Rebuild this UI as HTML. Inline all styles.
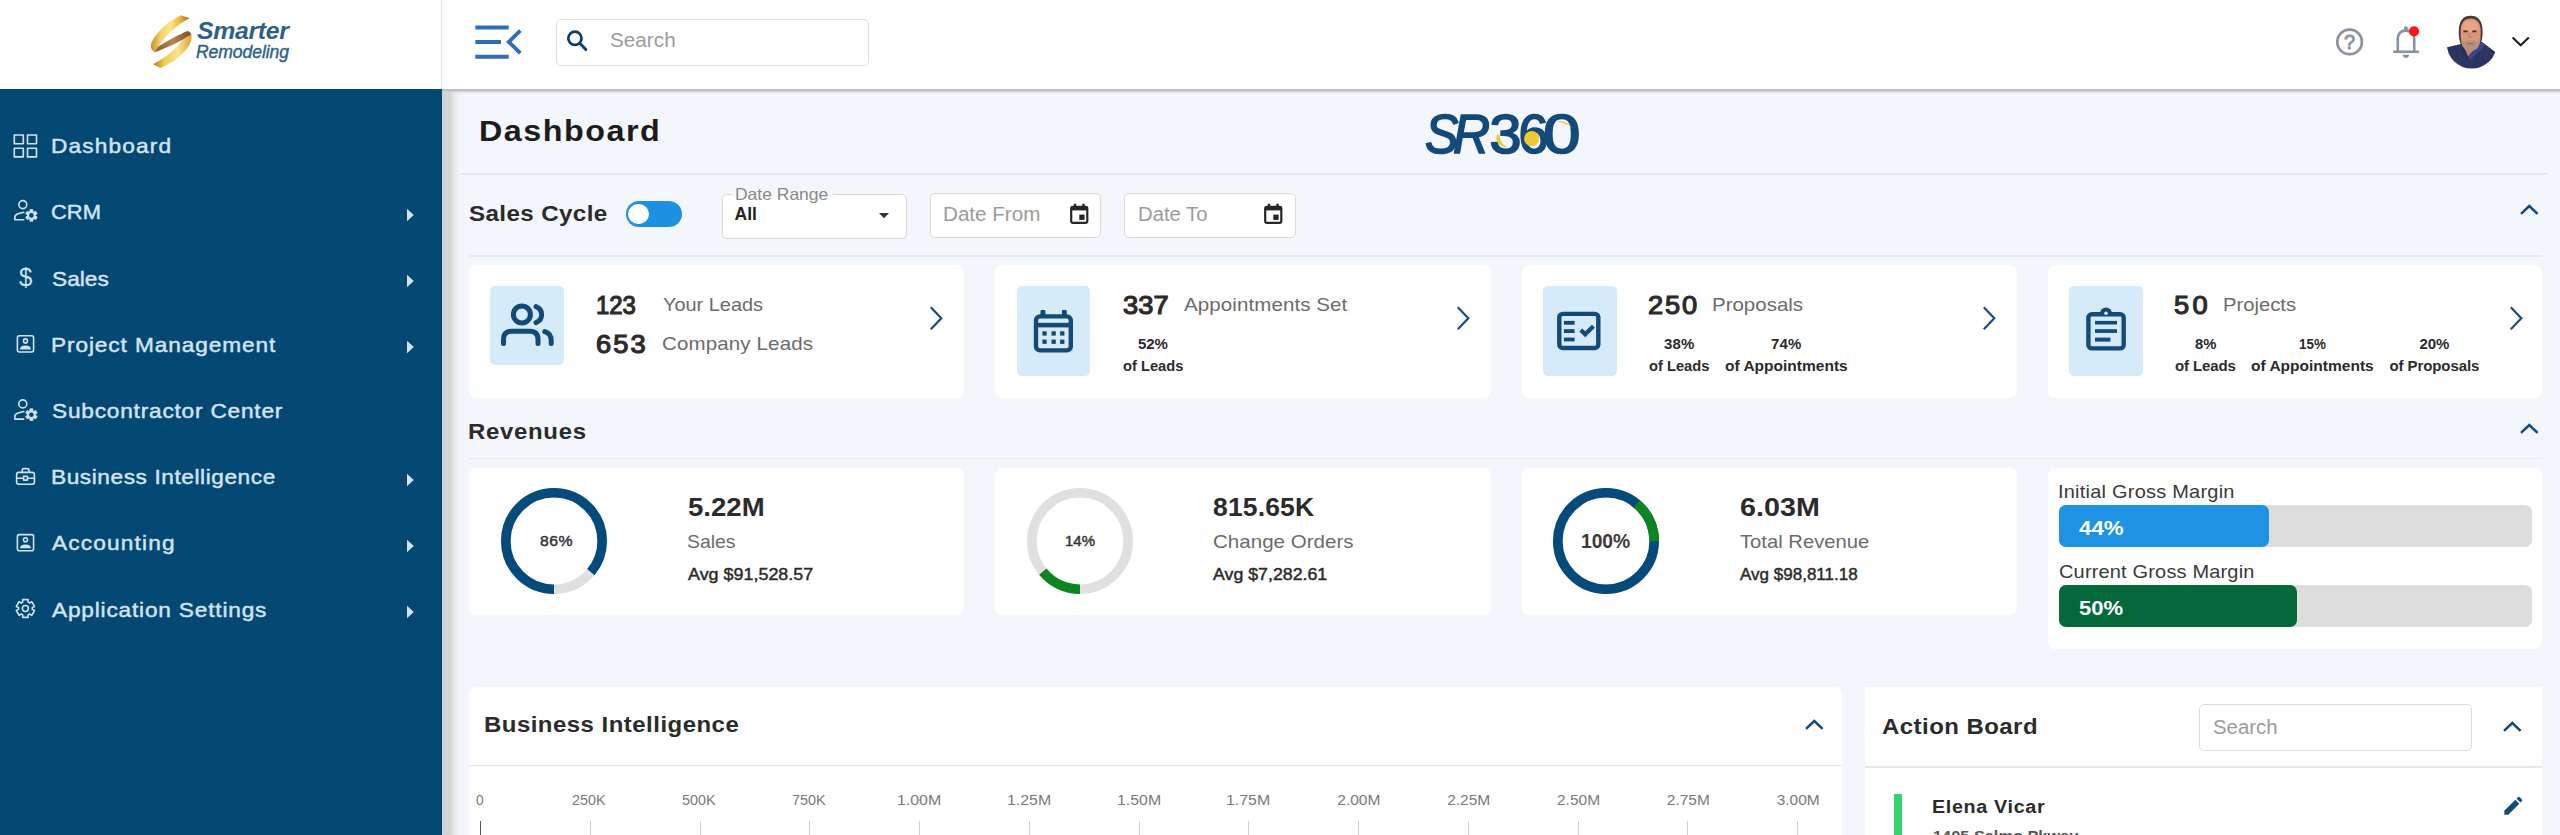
<!DOCTYPE html>
<html lang="en"><head><meta charset="utf-8"><title>Dashboard</title>
<style>
*{box-sizing:border-box;margin:0;padding:0}
html,body{width:2560px;height:835px;overflow:hidden;background:#f3f6fb;font-family:"Liberation Sans",sans-serif}
body{position:relative}
.abs{position:absolute}
.t{position:absolute;white-space:pre;line-height:1;font-weight:400}
.t.b{font-weight:700}
.t.m{-webkit-text-stroke:0.45px currentColor}
.t.m2{-webkit-text-stroke:1.15px currentColor}
#side{position:absolute;left:0;top:0;width:442px;height:835px;background:#034873}
#logo{position:absolute;left:0;top:0;width:442px;height:89px;background:#fff;border-right:1px solid #dbe3ed}
#top{position:absolute;left:442px;top:0;width:2118px;height:89px;background:#fff;}
#topshadow{position:absolute;left:442px;top:89px;width:2118px;height:5px;background:linear-gradient(to bottom,#bbbcc0 0,#c3c4c8 38%,rgba(210,213,218,.55) 65%,rgba(243,246,251,0) 100%)}
#sideshadow{position:absolute;left:442px;top:89px;width:20px;height:746px;background:linear-gradient(to right,#d2d2d2 0,#d5d5d5 8px,rgba(226,228,231,.6) 13px,rgba(243,246,251,0) 18.5px)}
.card{position:absolute;background:#fff;border-radius:7px}
.ibox{position:absolute;background:#d6ebf9;border-radius:5px}
.hr{position:absolute;height:1.5px;background:#e5eaf1}
.inp{position:absolute;background:#fff;border:1px solid #d9d9d9;border-radius:5px}
svg{position:absolute;overflow:visible}

</style></head>
<body>
<div id="side"><div id="logo"></div></div>
<div id="sideshadow"></div>
<div id="top"></div><div id="topshadow"></div>
<svg style="left:148px;top:13px" width="46" height="58" viewBox="148 13 46 58">
<defs>
<linearGradient id="g1" x1="0" y1="0" x2="1" y2="0"><stop offset="0" stop-color="#c98f2a"/><stop offset=".25" stop-color="#f6d267"/><stop offset=".5" stop-color="#fbe48d"/><stop offset=".75" stop-color="#eab93f"/><stop offset="1" stop-color="#a8671f"/></linearGradient>
<linearGradient id="g2" x1="0" y1="0" x2="1" y2="0"><stop offset="0" stop-color="#8a5a2a"/><stop offset=".5" stop-color="#b98452"/><stop offset="1" stop-color="#7a4a22"/></linearGradient>
<linearGradient id="g3" x1="0" y1="0" x2="1" y2="0"><stop offset="0" stop-color="#b87824"/><stop offset=".3" stop-color="#f3cb55"/><stop offset=".65" stop-color="#fbe48d"/><stop offset="1" stop-color="#d9a233"/></linearGradient>
</defs>
<path d="M180.7 15.3 L189.7 18.2 C178 24 166.5 34 158 47 L154.5 52.2 C150.3 49.5 150 45 152.5 40.5 C158 30.5 168 21.5 180.7 15.3Z" fill="url(#g1)"/>
<path d="M154.5 52.2 L158 46.8 C166 41.5 178 35 187.3 31 C189.5 31.3 190.8 32.8 191.3 35 C180 41.5 166 48.5 154.5 52.2Z" fill="url(#g2)"/>
<path d="M191.3 34.6 C192.8 41 188.5 47.5 183.5 52.5 C176.5 59.5 168.5 65 160.4 68 L153 64.2 C163.5 59 173.5 51 180 43 C183.5 39 187.3 36.3 191.3 34.6Z" fill="url(#g3)"/>
</svg>
<svg style="left:12px;top:132px" width="28" height="28" viewBox="12 132 28 28"><rect x="14.3" y="135" width="9" height="8.7" fill="none" stroke="#d3e3f3" stroke-width="1.6" stroke-linecap="round" stroke-linejoin="round" stroke-linejoin="miter"/><rect x="27.5" y="135" width="9" height="8.7" fill="none" stroke="#d3e3f3" stroke-width="1.6" stroke-linecap="round" stroke-linejoin="round" stroke-linejoin="miter"/><rect x="14.3" y="148.2" width="9" height="8.7" fill="none" stroke="#d3e3f3" stroke-width="1.6" stroke-linecap="round" stroke-linejoin="round" stroke-linejoin="miter"/><rect x="27.5" y="148.2" width="9" height="8.7" fill="none" stroke="#d3e3f3" stroke-width="1.6" stroke-linecap="round" stroke-linejoin="round" stroke-linejoin="miter"/></svg>
<svg style="left:12px;top:198px" width="28" height="28" viewBox="12 198 28 28"><circle cx="22.8" cy="204.6" r="4" fill="none" stroke="#d3e3f3" stroke-width="1.6" stroke-linecap="round" stroke-linejoin="round"/><path d="M23.8 212.2 L18 213.79999999999998 Q14.8 214.79999999999998 14.8 217.6 L14.8 219.79999999999998 L23.8 219.79999999999998" fill="none" stroke="#d3e3f3" stroke-width="1.6" stroke-linecap="round" stroke-linejoin="round"/><path d="M33.03 211.75 L32.83 209.57 L29.97 209.57 L29.77 211.75 L29.05 212.16 L27.07 211.25 L25.64 213.72 L27.42 214.99 L27.42 215.81 L25.64 217.08 L27.07 219.55 L29.05 218.64 L29.77 219.05 L29.97 221.23 L32.83 221.23 L33.03 219.05 L33.75 218.64 L35.73 219.55 L37.16 217.08 L35.38 215.81 L35.38 214.99 L37.16 213.72 L35.73 211.25 L33.75 212.16Z" fill="#d3e3f3" stroke="#d3e3f3" stroke-width="0.8" stroke-linejoin="round"/><circle cx="31.4" cy="215.4" r="2.3" fill="#034873"/></svg>
<svg style="left:12px;top:397px" width="28" height="28" viewBox="12 397 28 28"><circle cx="22.8" cy="403.9" r="4" fill="none" stroke="#d3e3f3" stroke-width="1.6" stroke-linecap="round" stroke-linejoin="round"/><path d="M23.8 411.5 L18 413.09999999999997 Q14.8 414.09999999999997 14.8 416.9 L14.8 419.09999999999997 L23.8 419.09999999999997" fill="none" stroke="#d3e3f3" stroke-width="1.6" stroke-linecap="round" stroke-linejoin="round"/><path d="M33.03 411.05 L32.83 408.87 L29.97 408.87 L29.77 411.05 L29.05 411.46 L27.07 410.55 L25.64 413.02 L27.42 414.29 L27.42 415.11 L25.64 416.38 L27.07 418.85 L29.05 417.94 L29.77 418.35 L29.97 420.53 L32.83 420.53 L33.03 418.35 L33.75 417.94 L35.73 418.85 L37.16 416.38 L35.38 415.11 L35.38 414.29 L37.16 413.02 L35.73 410.55 L33.75 411.46Z" fill="#d3e3f3" stroke="#d3e3f3" stroke-width="0.8" stroke-linejoin="round"/><circle cx="31.4" cy="414.7" r="2.3" fill="#034873"/></svg>
<svg style="left:14px;top:333px" width="24" height="24" viewBox="14 333 24 24"><rect x="17.4" y="335.8" width="16.2" height="16.2" rx="2" fill="none" stroke="#d3e3f3" stroke-width="1.6" stroke-linecap="round" stroke-linejoin="round"/><circle cx="25.5" cy="340.9" r="2" fill="none" stroke="#d3e3f3" stroke-width="1.6" stroke-linecap="round" stroke-linejoin="round" stroke-width="1.4"/><path d="M20 349.4 Q20 345.6 25.5 345.6 Q31 345.6 31 349.4Z" fill="#d3e3f3"/></svg>
<svg style="left:14px;top:532px" width="24" height="24" viewBox="14 532 24 24"><rect x="17.4" y="534.5999999999999" width="16.2" height="16.2" rx="2" fill="none" stroke="#d3e3f3" stroke-width="1.6" stroke-linecap="round" stroke-linejoin="round"/><circle cx="25.5" cy="539.6999999999999" r="2" fill="none" stroke="#d3e3f3" stroke-width="1.6" stroke-linecap="round" stroke-linejoin="round" stroke-width="1.4"/><path d="M20 548.1999999999999 Q20 544.4 25.5 544.4 Q31 544.4 31 548.1999999999999Z" fill="#d3e3f3"/></svg>
<svg style="left:14px;top:465px" width="24" height="24" viewBox="14 465 24 24"><rect x="16.6" y="472.4" width="17.8" height="11.8" rx="2.2" fill="none" stroke="#d3e3f3" stroke-width="1.6" stroke-linecap="round" stroke-linejoin="round"/><path d="M22.2 472.2 L22.2 470.2 Q22.2 468.6 23.8 468.6 L27.4 468.6 Q29 468.6 29 470.2 L29 472.2" fill="none" stroke="#d3e3f3" stroke-width="1.6" stroke-linecap="round" stroke-linejoin="round"/><path d="M16.8 478.2 L23.4 478.2 M27.6 478.2 L34.2 478.2" fill="none" stroke="#d3e3f3" stroke-width="1.6" stroke-linecap="round" stroke-linejoin="round"/><rect x="23.6" y="476.3" width="3.8" height="3.8" fill="none" stroke="#d3e3f3" stroke-width="1.6" stroke-linecap="round" stroke-linejoin="round" stroke-width="1.4"/></svg>
<svg style="left:13px;top:596px" width="25" height="25" viewBox="13 596 25 25"><path d="M28.09 602.14 L28.15 599.62 L22.65 599.62 L22.71 602.14 L21.24 603 L19.08 601.68 L16.33 606.44 L18.55 607.65 L18.55 609.35 L16.33 610.56 L19.08 615.32 L21.24 614 L22.71 614.86 L22.65 617.38 L28.15 617.38 L28.09 614.86 L29.56 614 L31.72 615.32 L34.47 610.56 L32.25 609.35 L32.25 607.65 L34.47 606.44 L31.72 601.68 L29.56 603Z" fill="none" stroke="#d3e3f3" stroke-width="1.6" stroke-linecap="round" stroke-linejoin="round" stroke-width="1.5"/><circle cx="25.4" cy="608.5" r="3" fill="none" stroke="#d3e3f3" stroke-width="1.6" stroke-linecap="round" stroke-linejoin="round" stroke-width="1.5"/></svg>
<div class="t" style="left:18.8px;top:265px;font-size:25px;color:#d3e3f3;transform:scaleX(.96);transform-origin:0 0">$</div>
<svg style="left:406px;top:207px" width="10" height="16" viewBox="406 207 10 16"><path d="M407 208.8 L413.8 215 L407 221.2Z" fill="#d3e3f3"/></svg>
<svg style="left:406px;top:273.2px" width="10" height="16" viewBox="406 273.2 10 16"><path d="M407 275 L413.8 281.2 L407 287.4Z" fill="#d3e3f3"/></svg>
<svg style="left:406px;top:339.40000000000003px" width="10" height="16" viewBox="406 339.40000000000003 10 16"><path d="M407 341.20000000000005 L413.8 347.40000000000003 L407 353.6Z" fill="#d3e3f3"/></svg>
<svg style="left:406px;top:471.8px" width="10" height="16" viewBox="406 471.8 10 16"><path d="M407 473.6 L413.8 479.8 L407 486Z" fill="#d3e3f3"/></svg>
<svg style="left:406px;top:538px" width="10" height="16" viewBox="406 538 10 16"><path d="M407 539.8 L413.8 546 L407 552.2Z" fill="#d3e3f3"/></svg>
<svg style="left:406px;top:604.1999999999999px" width="10" height="16" viewBox="406 604.1999999999999 10 16"><path d="M407 605.9999999999999 L413.8 612.1999999999999 L407 618.4Z" fill="#d3e3f3"/></svg>
<svg style="left:470px;top:20px" width="56" height="44" viewBox="470 20 56 44"><path d="M475.3 27.5H508.7M475.3 41.9H501M475.3 56.7H508.7" stroke="#2f6db5" stroke-width="4" fill="none"/><path d="M520.3 30.6 L508.8 41.9 L520.3 53.2" stroke="#2f6db5" stroke-width="3.8" fill="none" stroke-linejoin="miter"/></svg>
<div class="inp" style="left:556px;top:19px;width:313px;height:46.5px;border-color:#dde0e4"></div>
<svg style="left:565px;top:29px" width="24" height="24" viewBox="565 29 24 24"><circle cx="574.9" cy="38.3" r="6.6" fill="none" stroke="#0c3f6a" stroke-width="2.7"/><path d="M579.8 43.3 L585.8 49.5" stroke="#0c3f6a" stroke-width="3" stroke-linecap="round"/></svg>
<svg style="left:2334px;top:27px" width="32" height="32" viewBox="2334 27 32 32"><circle cx="2349.6" cy="41.9" r="12.3" fill="none" stroke="#8a929e" stroke-width="2.7"/></svg>
<div class="t" style="left:2344px;top:32.4px;font-size:20px;color:#8a929e;-webkit-text-stroke:.9px #8a929e">?</div>
<svg style="left:2390px;top:24px" width="32" height="36" viewBox="2390 24 32 36"><path d="M2397.8 51.5 L2397.8 38.8 Q2397.8 30.6 2406 30.6 Q2414.2 30.6 2414.2 38.8 L2414.2 51.5" fill="none" stroke="#8a929e" stroke-width="2.6"/><path d="M2393.3 51.8 H2418.9" stroke="#8a929e" stroke-width="2.6"/><path d="M2404 30.5 L2404 28 Q2404 26.3 2405.9 26.3 Q2407.8 26.3 2407.8 28 L2407.8 30.5Z" fill="#8a929e"/><path d="M2402.6 54.8 H2409.2 Q2408.8 57.9 2405.9 57.9 Q2403 57.9 2402.6 54.8Z" fill="#8a929e"/><circle cx="2414" cy="31.3" r="5.1" fill="#ff1515"/></svg>
<svg style="left:2444px;top:14px" width="56" height="58" viewBox="2444 14 56 58"><defs><clipPath id="av"><circle cx="2471.7" cy="43.6" r="25"/></clipPath></defs>
<g clip-path="url(#av)">
<path d="M2461 40 L2480.5 40 L2480.5 44 L2468 60 L2461 48Z" fill="#c58464"/>
<path d="M2443 48.5 L2447 47.2 L2462.2 43.7 L2468 56.5 L2481.8 41.8 L2496.7 52.9 L2501 57 L2501 72 L2443 72Z" fill="#2c3561"/>
<path d="M2481.8 41.8 L2485 45.5 L2470.5 59.5 L2468 56.5Z" fill="#37498a"/>
<path d="M2462.2 43.7 L2459.5 46.5 L2466 58.5 L2468 56.5Z" fill="#263058"/>
</g>
<path d="M2458.7 32 C2458.7 20 2463.5 15.7 2470.6 15.7 C2477.8 15.7 2482.6 20 2482.6 32 C2482.6 38 2481.5 43 2479.5 46 L2461.8 46 C2459.8 43 2458.7 38 2458.7 32Z" fill="#4a3a33"/>
<path d="M2460.6 32 C2460.6 22.5 2464.5 18.6 2470.6 18.6 C2476.8 18.6 2480.7 22.5 2480.7 32 C2480.7 40 2479.8 45.5 2476.5 48.8 Q2470.6 52.5 2464.8 48.8 C2461.5 45.5 2460.6 40 2460.6 32Z" fill="#dc977a"/>
<ellipse cx="2470.3" cy="26.5" rx="7.5" ry="5.5" fill="#eaa586"/>
<path d="M2461 38.5 Q2461.5 46 2464.8 48.8 Q2470.6 52.5 2476.5 48.8 Q2479.8 46 2480.3 38.5 Q2478 43 2474.5 40.8 Q2470.6 39.3 2466.5 40.8 Q2463 43 2461 38.5Z" fill="#b3907f"/>
<path d="M2463.5 31.3h4.2M2472.3 31.3h4.2" stroke="#4a342c" stroke-width="1.8"/>
<path d="M2467.5 43.6h6" stroke="#9a6a58" stroke-width="1.3"/>
<path d="M2469.5 33 L2468.8 37.5 H2472" fill="none" stroke="#b87a60" stroke-width="1"/></svg>
<svg style="left:2510px;top:34px" width="22" height="16" viewBox="2510 34 22 16"><path d="M2512.6 37.4 L2520.7 45.2 L2528.8 37.4" fill="none" stroke="#222" stroke-width="2.1"/></svg>
<div class="hr" style="left:458px;top:173.2px;width:2090px"></div>
<div class="abs" style="left:626px;top:200.6px;width:56.3px;height:26.8px;border-radius:14px;background:#1e90e2"></div>
<div class="abs" style="left:628.3px;top:203.6px;width:20.8px;height:20.8px;border-radius:50%;background:#fff"></div>
<div class="inp" style="left:722px;top:194px;width:184.5px;height:44.5px"></div>
<div class="abs" style="left:731px;top:192px;width:102px;height:5px;background:#f6f8fc"></div>
<svg style="left:878px;top:211px" width="12" height="8" viewBox="878 211 12 8"><path d="M879 213 H889 L884 218.2Z" fill="#333"/></svg>
<div class="inp" style="left:929.5px;top:193px;width:171px;height:44.5px"></div>
<div class="inp" style="left:1124px;top:193px;width:171.5px;height:44.5px"></div>
<svg style="left:1069.5px;top:202px" width="20" height="24" viewBox="1069.5 202 20 24"><path d="M1070.7 208.5 Q1070.7 206.8 1072.5 206.8 H1085 Q1086.8 206.8 1086.8 208.5 V221 Q1086.8 222.8 1085 222.8 H1072.5 Q1070.7 222.8 1070.7 221Z" fill="none" stroke="#262626" stroke-width="2.2"/><rect x="1070.7" y="206.2" width="16.1" height="4.2" fill="#262626"/><rect x="1073.3" y="203.8" width="2.4" height="4" fill="#262626"/><rect x="1081.8" y="203.8" width="2.4" height="4" fill="#262626"/><rect x="1078.8" y="214.6" width="5.3" height="5.3" fill="#262626"/></svg>
<svg style="left:1264px;top:202px" width="20" height="24" viewBox="1264 202 20 24"><path d="M1265.2 208.5 Q1265.2 206.8 1267 206.8 H1279.5 Q1281.3 206.8 1281.3 208.5 V221 Q1281.3 222.8 1279.5 222.8 H1267 Q1265.2 222.8 1265.2 221Z" fill="none" stroke="#262626" stroke-width="2.2"/><rect x="1265.2" y="206.2" width="16.1" height="4.2" fill="#262626"/><rect x="1267.8" y="203.8" width="2.4" height="4" fill="#262626"/><rect x="1276.3" y="203.8" width="2.4" height="4" fill="#262626"/><rect x="1273.3" y="214.6" width="5.3" height="5.3" fill="#262626"/></svg>
<svg style="left:2518.2999999999997px;top:203.10000000000002px" width="22.6" height="13.4" viewBox="2518.2999999999997 203.10000000000002 22.6 13.4"><path d="M2521.2999999999997 214 L2529.6 206.10000000000002 L2537.9 214" fill="none" stroke="#134a78" stroke-width="2.5"/></svg>
<div class="hr" style="left:469px;top:255.2px;width:2073px"></div>
<div class="card" style="left:469px;top:264.5px;width:495px;height:133px"></div>
<div class="card" style="left:995px;top:264.5px;width:495.5px;height:133px"></div>
<div class="card" style="left:1522px;top:264.5px;width:495px;height:133px"></div>
<div class="card" style="left:2048px;top:264.5px;width:494px;height:133px"></div>
<div class="ibox" style="left:490px;top:286px;width:73.8px;height:79.4px"></div>
<div class="ibox" style="left:1016.7px;top:286px;width:73.6px;height:89.8px"></div>
<div class="ibox" style="left:1543.1px;top:286px;width:73.6px;height:89.8px"></div>
<div class="ibox" style="left:2069.1px;top:286px;width:73.6px;height:89.8px"></div>
<svg style="left:928px;top:304.3px" width="18" height="28" viewBox="928 304.3 18 28"><path d="M930.8 307.5 L941.3 318.5 L930.8 329.5" fill="none" stroke="#1a4d7a" stroke-width="2.2" stroke-linejoin="miter"/></svg>
<svg style="left:1454.5px;top:304.3px" width="18" height="28" viewBox="1454.5 304.3 18 28"><path d="M1457.3 307.5 L1467.8 318.5 L1457.3 329.5" fill="none" stroke="#1a4d7a" stroke-width="2.2" stroke-linejoin="miter"/></svg>
<svg style="left:1981px;top:304.3px" width="18" height="28" viewBox="1981 304.3 18 28"><path d="M1983.8 307.5 L1994.3 318.5 L1983.8 329.5" fill="none" stroke="#1a4d7a" stroke-width="2.2" stroke-linejoin="miter"/></svg>
<svg style="left:2508px;top:304.3px" width="18" height="28" viewBox="2508 304.3 18 28"><path d="M2510.8 307.5 L2521.3 318.5 L2510.8 329.5" fill="none" stroke="#1a4d7a" stroke-width="2.2" stroke-linejoin="miter"/></svg>
<svg style="left:498px;top:300px" width="60" height="50" viewBox="498 300 60 50"><circle cx="521.9" cy="314.4" r="8.5" fill="none" stroke="#134a78" stroke-width="5" stroke-linecap="round"/><path d="M536 306.6 A8.5 8.5 0 0 1 536 322.6" fill="none" stroke="#134a78" stroke-width="5" stroke-linecap="round"/><path d="M503.5 343.5 V339.5 Q503.5 331.2 511.8 331.2 H529.7 Q538 331.2 538 339.5 V343.5" fill="none" stroke="#134a78" stroke-width="5" stroke-linecap="round"/><path d="M544.8 331.6 Q551.2 333.5 551.2 340.5 V343.5" fill="none" stroke="#134a78" stroke-width="5" stroke-linecap="round"/></svg>
<svg style="left:1032px;top:308px" width="44" height="46" viewBox="1032 308 44 46"><rect x="1036" y="316.4" width="34.8" height="34" rx="4" fill="none" stroke="#134a78" stroke-width="4.4"/><rect x="1040.5" y="310" width="4.9" height="6" rx="1" fill="#134a78"/><rect x="1061.9" y="310" width="4.9" height="6" rx="1" fill="#134a78"/><rect x="1036" y="322.8" width="34.8" height="4.6" fill="#134a78"/><rect x="1042.4" y="331.3" width="4.3" height="4.3" fill="#134a78"/><rect x="1042.4" y="339.6" width="4.3" height="4.3" fill="#134a78"/><rect x="1051.5" y="331.3" width="4.3" height="4.3" fill="#134a78"/><rect x="1051.5" y="339.6" width="4.3" height="4.3" fill="#134a78"/><rect x="1060.1" y="331.3" width="4.3" height="4.3" fill="#134a78"/><rect x="1060.1" y="339.6" width="4.3" height="4.3" fill="#134a78"/></svg>
<svg style="left:1555px;top:310px" width="48" height="42" viewBox="1555 310 48 42"><rect x="1559.3" y="313.9" width="39" height="34.1" rx="3.5" fill="none" stroke="#134a78" stroke-width="4.4"/><rect x="1563.9" y="320.9" width="10.7" height="3.8" fill="#134a78"/><rect x="1563.9" y="329.2" width="10.7" height="3.8" fill="#134a78"/><rect x="1563.9" y="337.6" width="10.7" height="3.8" fill="#134a78"/><path d="M1580.8 330 L1585.2 334.3 L1593.4 326.2" fill="none" stroke="#134a78" stroke-width="4.2"/></svg>
<svg style="left:2084px;top:306px" width="44" height="46" viewBox="2084 306 44 46"><circle cx="2106" cy="313.4" r="6" fill="#134a78"/><rect x="2088.4" y="314.2" width="35.3" height="34.2" rx="3.5" fill="#d6ebf9" stroke="#134a78" stroke-width="4.4"/><circle cx="2106" cy="313.2" r="1.7" fill="#eaf5fc"/><rect x="2095" y="320.9" width="22" height="3.6" fill="#134a78"/><rect x="2095" y="329.2" width="22" height="3.7" fill="#134a78"/><rect x="2095" y="337.6" width="15.4" height="4" fill="#134a78"/></svg>
<svg style="left:2518.1px;top:421.6px" width="22.6" height="13.4" viewBox="2518.1 421.6 22.6 13.4"><path d="M2521.1 432.5 L2529.4 424.6 L2537.7000000000003 432.5" fill="none" stroke="#134a78" stroke-width="2.5"/></svg>
<div class="hr" style="left:469px;top:457.5px;width:2073px"></div>
<div class="card" style="left:469px;top:467.5px;width:495px;height:147px"></div>
<div class="card" style="left:995px;top:467.5px;width:495.5px;height:147px"></div>
<div class="card" style="left:1522px;top:467.5px;width:495px;height:147px"></div>
<div class="card" style="left:2048px;top:467.5px;width:494px;height:181.5px"></div>
<svg style="left:500px;top:487px" width="108" height="108" viewBox="500 487 108 108"><circle cx="554" cy="541" r="48.2" fill="none" stroke="#e0e0e0" stroke-width="9.6"/><circle cx="554" cy="541" r="48.2" fill="none" stroke="#044a7a" stroke-width="9.6" stroke-dasharray="260.45 42.4" transform="rotate(90 554 541)"/></svg>
<svg style="left:1026.3px;top:487px" width="108" height="108" viewBox="1026.3 487 108 108"><circle cx="1080.3" cy="541" r="48.2" fill="none" stroke="#e0e0e0" stroke-width="9.6"/><circle cx="1080.3" cy="541" r="48.2" fill="none" stroke="#0b8520" stroke-width="9.6" stroke-dasharray="42.4 260.45" transform="rotate(90 1080.3 541)"/></svg>
<svg style="left:1552px;top:487px" width="108" height="108" viewBox="1552 487 108 108"><circle cx="1606" cy="541" r="48.2" fill="none" stroke="#e0e0e0" stroke-width="9.6"/><circle cx="1606" cy="541" r="48.2" fill="none" stroke="#044a7a" stroke-width="9.6"/><circle cx="1606" cy="541" r="48.2" fill="none" stroke="#0b8520" stroke-width="9.6" stroke-dasharray="42.4 260.45" transform="rotate(-50.4 1606 541)"/></svg>
<div class="abs" style="left:2058.8px;top:504.6px;width:473px;height:42.2px;border-radius:7px;background:#dddddd"></div>
<div class="abs" style="left:2058.8px;top:504.6px;width:210.4px;height:42.2px;border-radius:7px;background:#1e93e4"></div>
<div class="abs" style="left:2058.8px;top:584.8px;width:473px;height:42.2px;border-radius:7px;background:#dddddd"></div>
<div class="abs" style="left:2058.8px;top:584.8px;width:238px;height:42.2px;border-radius:7px;background:#05683a"></div>
<div class="card" style="left:469px;top:687px;width:1373px;height:160px"></div>
<div class="hr" style="left:469px;top:764.6px;width:1373px;background:#e4e9f1"></div>
<svg style="left:1802.7px;top:718.3px" width="22.6" height="13.4" viewBox="1802.7 718.3 22.6 13.4"><path d="M1805.7 729.2 L1814 721.3 L1822.3 729.2" fill="none" stroke="#134a78" stroke-width="2.5"/></svg>
<div class="card" style="left:1864.5px;top:687px;width:677.5px;height:160px;border-radius:1px 0 0 0"></div>
<div class="hr" style="left:1864.5px;top:766px;width:677.5px;height:2px;background:#e4e9f1"></div>
<div class="inp" style="left:2199px;top:703.8px;width:273px;height:46.8px;border-color:#dcdcdc"></div>
<svg style="left:2501.3999999999996px;top:720.3px" width="22.6" height="13.4" viewBox="2501.3999999999996 720.3 22.6 13.4"><path d="M2504.3999999999996 731.2 L2512.7 723.3 L2521 731.2" fill="none" stroke="#134a78" stroke-width="2.5"/></svg>
<div class="abs" style="left:1894.3px;top:794.3px;width:7.8px;height:45px;background:#33d36f"></div>
<svg style="left:2502px;top:795px" width="24" height="24" viewBox="2502 795 24 24"><path d="M2504.3 814.8 L2504.3 810.8 L2515.3 799.8 L2519.3 803.8 L2508.3 814.8Z" fill="#134a78"/><path d="M2516.5 798.6 L2518 797.2 Q2518.8 796.5 2519.6 797.2 L2521.9 799.5 Q2522.6 800.3 2521.9 801.1 L2520.5 802.6Z" fill="#134a78"/></svg>
<div class="abs" style="left:479.8px;top:821.2px;width:1.4px;height:14px;background:#555"></div>
<div class="abs" style="left:589.8px;top:821.2px;width:1.2px;height:14px;background:#cfcfcf"></div>
<div class="abs" style="left:699.5px;top:821.2px;width:1.2px;height:14px;background:#cfcfcf"></div>
<div class="abs" style="left:809.2px;top:821.2px;width:1.2px;height:14px;background:#cfcfcf"></div>
<div class="abs" style="left:919px;top:821.2px;width:1.2px;height:14px;background:#cfcfcf"></div>
<div class="abs" style="left:1028.8px;top:821.2px;width:1.2px;height:14px;background:#cfcfcf"></div>
<div class="abs" style="left:1138.5px;top:821.2px;width:1.2px;height:14px;background:#cfcfcf"></div>
<div class="abs" style="left:1248.2px;top:821.2px;width:1.2px;height:14px;background:#cfcfcf"></div>
<div class="abs" style="left:1358px;top:821.2px;width:1.2px;height:14px;background:#cfcfcf"></div>
<div class="abs" style="left:1467.8px;top:821.2px;width:1.2px;height:14px;background:#cfcfcf"></div>
<div class="abs" style="left:1577.5px;top:821.2px;width:1.2px;height:14px;background:#cfcfcf"></div>
<div class="abs" style="left:1687.2px;top:821.2px;width:1.2px;height:14px;background:#cfcfcf"></div>
<div class="abs" style="left:1797px;top:821.2px;width:1.2px;height:14px;background:#cfcfcf"></div>
<div class="t b" style="left:196.5px;top:19.2px;font-size:24.5px;color:#2d5f88;font-style:italic;letter-spacing:-0.3px;transform:scaleX(1.012);transform-origin:0 0">Smarter</div>
<div class="t" style="left:196px;top:43.5px;font-size:17.6px;color:#2d5f88;font-style:italic;letter-spacing:-0.1px;-webkit-text-stroke:.4px #2d5f88">Remodeling</div>
<svg style="left:1420px;top:108px" width="166" height="52" viewBox="1420 108 166 52"><text x="1425" y="153.3" font-family="Liberation Sans, sans-serif" font-size="55.5" font-weight="400" font-style="italic" fill="#134a7a" stroke="#134a7a" stroke-width="1.7" stroke-linejoin="round" textLength="33.5" lengthAdjust="spacingAndGlyphs">S</text><text x="1453" y="153.3" font-family="Liberation Sans, sans-serif" font-size="55.5" font-weight="400" font-style="italic" fill="#134a7a" stroke="#134a7a" stroke-width="1.7" stroke-linejoin="round" textLength="37" lengthAdjust="spacingAndGlyphs">R</text><text x="1489.5" y="153.3" font-family="Liberation Sans, sans-serif" font-size="55.5" font-weight="400" fill="#134a7a" stroke="#134a7a" stroke-width="1.7" stroke-linejoin="round" textLength="32" lengthAdjust="spacingAndGlyphs">3</text><text x="1518.5" y="153.3" font-family="Liberation Sans, sans-serif" font-size="55.5" font-weight="400" fill="#134a7a" stroke="#134a7a" stroke-width="1.7" stroke-linejoin="round" textLength="30" lengthAdjust="spacingAndGlyphs">6</text><text x="1543" y="153.3" font-family="Liberation Sans, sans-serif" font-size="55.5" font-weight="400" fill="#134a7a" stroke="#134a7a" stroke-width="1.7" stroke-linejoin="round" textLength="37.5" lengthAdjust="spacingAndGlyphs">0</text><circle cx="1531.7" cy="138.7" r="7.6" fill="#edc932"/><path d="M1497.2 134.2 Q1493.5 144.5 1507.5 147.8 Q1499.5 143 1499.6 134.8Z" fill="#edc932"/><path d="M1556 121.5 Q1566 119.5 1572 128 Q1565 122 1556 121.5Z" fill="#edc932"/></svg>
<!-- text layer -->
<div class="t m" style="left:51.3px;top:135px;font-size:21px;color:#d3e3f3;transform:scaleX(1.080);transform-origin:0 0;letter-spacing:1.05px;">Dashboard</div>
<div class="t m" style="left:51.4px;top:201px;font-size:21px;color:#d3e3f3;transform:scaleX(1.043);transform-origin:0 0;">CRM</div>
<div class="t m" style="left:52.4px;top:268px;font-size:21px;color:#d3e3f3;transform:scaleX(1.080);transform-origin:0 0;letter-spacing:0.02px;">Sales</div>
<div class="t m" style="left:51.3px;top:334px;font-size:21px;color:#d3e3f3;transform:scaleX(1.080);transform-origin:0 0;letter-spacing:0.82px;">Project Management</div>
<div class="t m" style="left:52.4px;top:400px;font-size:21px;color:#d3e3f3;transform:scaleX(1.080);transform-origin:0 0;letter-spacing:0.72px;">Subcontractor Center</div>
<div class="t m" style="left:51.3px;top:466px;font-size:21px;color:#d3e3f3;transform:scaleX(1.080);transform-origin:0 0;letter-spacing:0.52px;">Business Intelligence</div>
<div class="t m" style="left:52.4px;top:532px;font-size:21px;color:#d3e3f3;transform:scaleX(1.080);transform-origin:0 0;letter-spacing:1.07px;">Accounting</div>
<div class="t m" style="left:52.4px;top:599px;font-size:21px;color:#d3e3f3;transform:scaleX(1.080);transform-origin:0 0;letter-spacing:0.74px;">Application Settings</div>
<div class="t" style="left:609.5px;top:30px;font-size:20px;color:#9b9b9b;transform:scaleX(1.036);transform-origin:0 0;">Search</div>
<div class="t b" style="left:479.1px;top:116px;font-size:29.9px;color:#1c1c1c;transform:scaleX(1.080);transform-origin:0 0;letter-spacing:1.41px;">Dashboard</div>
<div class="t b" style="left:469.3px;top:203px;font-size:22.4px;color:#2b2b2b;transform:scaleX(1.080);transform-origin:0 0;letter-spacing:0.35px;">Sales Cycle</div>
<div class="t" style="left:734.9px;top:186px;font-size:16.5px;color:#8a8a8a;transform:scaleX(1.059);transform-origin:0 0;">Date Range</div>
<div class="t b" style="left:734.5px;top:206px;font-size:17.5px;color:#222;">All</div>
<div class="t" style="left:942.9px;top:205px;font-size:19.5px;color:#9b9b9b;transform:scaleX(1.057);transform-origin:0 0;">Date From</div>
<div class="t" style="left:1138.0px;top:205px;font-size:19.5px;color:#9b9b9b;transform:scaleX(1.040);transform-origin:0 0;">Date To</div>
<div class="t m m2" style="left:596.1px;top:293px;font-size:25.2px;color:#2b2b2b;transform:scaleX(0.950);transform-origin:0 0;">123</div>
<div class="t" style="left:662.5px;top:295px;font-size:19px;color:#6b6b6b;transform:scaleX(1.048);transform-origin:0 0;">Your Leads</div>
<div class="t m m2" style="left:595.9px;top:332px;font-size:25.2px;color:#2b2b2b;transform:scaleX(1.080);transform-origin:0 0;letter-spacing:1.98px;">653</div>
<div class="t" style="left:661.5px;top:334px;font-size:19px;color:#6b6b6b;transform:scaleX(1.080);transform-origin:0 0;letter-spacing:0.12px;">Company Leads</div>
<div class="t m m2" style="left:1123.0px;top:293px;font-size:25.2px;color:#2b2b2b;transform:scaleX(1.080);transform-origin:0 0;letter-spacing:0.09px;">337</div>
<div class="t" style="left:1184.0px;top:295px;font-size:19px;color:#6b6b6b;transform:scaleX(1.080);transform-origin:0 0;letter-spacing:0.08px;">Appointments Set</div>
<div class="t b" style="left:1138.0px;top:336px;font-size:15px;color:#2b2b2b;letter-spacing:-0.09px;">52%</div>
<div class="t b" style="left:1122.5px;top:358px;font-size:15px;color:#2b2b2b;transform:scaleX(0.978);transform-origin:0 0;">of Leads</div>
<div class="t m m2" style="left:1647.9px;top:293px;font-size:25.2px;color:#2b2b2b;transform:scaleX(1.080);transform-origin:0 0;letter-spacing:1.71px;">250</div>
<div class="t" style="left:1711.9px;top:295px;font-size:19px;color:#6b6b6b;transform:scaleX(1.078);transform-origin:0 0;">Proposals</div>
<div class="t b" style="left:1664.0px;top:336px;font-size:15px;color:#2b2b2b;letter-spacing:0.16px;">38%</div>
<div class="t b" style="left:1649.0px;top:358px;font-size:15px;color:#2b2b2b;transform:scaleX(0.978);transform-origin:0 0;">of Leads</div>
<div class="t b" style="left:1771.0px;top:336px;font-size:15px;color:#2b2b2b;letter-spacing:0.16px;">74%</div>
<div class="t b" style="left:1724.5px;top:358px;font-size:15px;color:#2b2b2b;transform:scaleX(1.035);transform-origin:0 0;">of Appointments</div>
<div class="t m m2" style="left:2174.4px;top:293px;font-size:25.2px;color:#2b2b2b;transform:scaleX(1.080);transform-origin:0 0;letter-spacing:3.08px;">50</div>
<div class="t" style="left:2223.4px;top:295px;font-size:19px;color:#6b6b6b;transform:scaleX(1.065);transform-origin:0 0;">Projects</div>
<div class="t b" style="left:2195.0px;top:336px;font-size:15px;color:#2b2b2b;transform:scaleX(0.984);transform-origin:0 0;">8%</div>
<div class="t b" style="left:2175.0px;top:358px;font-size:15px;color:#2b2b2b;letter-spacing:-0.12px;">of Leads</div>
<div class="t b" style="left:2299.0px;top:336px;font-size:15px;color:#2b2b2b;transform:scaleX(0.893);transform-origin:0 0;">15%</div>
<div class="t b" style="left:2251.0px;top:358px;font-size:15px;color:#2b2b2b;transform:scaleX(1.035);transform-origin:0 0;">of Appointments</div>
<div class="t b" style="left:2419.5px;top:336px;font-size:15px;color:#2b2b2b;letter-spacing:-0.09px;">20%</div>
<div class="t b" style="left:2389.5px;top:358px;font-size:15px;color:#2b2b2b;letter-spacing:-0.09px;">of Proposals</div>
<div class="t b" style="left:468.4px;top:421px;font-size:22.2px;color:#2b2b2b;transform:scaleX(1.080);transform-origin:0 0;letter-spacing:0.63px;">Revenues</div>
<div class="t m" style="left:539.5px;top:534px;font-size:14.6px;color:#333;transform:scaleX(1.080);transform-origin:0 0;letter-spacing:0.43px;">86%</div>
<div class="t b" style="left:687.5px;top:494px;font-size:26.5px;color:#2b2b2b;transform:scaleX(1.040);transform-origin:0 0;">5.22M</div>
<div class="t" style="left:687.0px;top:532px;font-size:19px;color:#6b6b6b;transform:scaleX(1.021);transform-origin:0 0;">Sales</div>
<div class="t m" style="left:687.5px;top:567px;font-size:16.6px;color:#2b2b2b;transform:scaleX(1.080);transform-origin:0 0;">Avg $91,528.57</div>
<div class="t m" style="left:1064.5px;top:534px;font-size:14.6px;color:#333;transform:scaleX(1.027);transform-origin:0 0;">14%</div>
<div class="t b" style="left:1213.0px;top:494px;font-size:26.5px;color:#2b2b2b;letter-spacing:0.16px;">815.65K</div>
<div class="t" style="left:1213.0px;top:532px;font-size:19px;color:#6b6b6b;transform:scaleX(1.080);transform-origin:0 0;letter-spacing:0.02px;">Change Orders</div>
<div class="t m" style="left:1213.0px;top:567px;font-size:16.6px;color:#2b2b2b;transform:scaleX(1.070);transform-origin:0 0;">Avg $7,282.61</div>
<div class="t b" style="left:1581.0px;top:532px;font-size:19.3px;color:#3a3a3a;letter-spacing:-0.06px;">100%</div>
<div class="t b" style="left:1740.0px;top:494px;font-size:26.5px;color:#2b2b2b;transform:scaleX(1.080);transform-origin:0 0;letter-spacing:0.09px;">6.03M</div>
<div class="t" style="left:1740.0px;top:532px;font-size:19px;color:#6b6b6b;transform:scaleX(1.065);transform-origin:0 0;">Total Revenue</div>
<div class="t m" style="left:1740.0px;top:567px;font-size:16.6px;color:#2b2b2b;transform:scaleX(1.026);transform-origin:0 0;">Avg $98,811.18</div>
<div class="t" style="left:2057.9px;top:483px;font-size:18.5px;color:#3a3a3a;transform:scaleX(1.080);transform-origin:0 0;letter-spacing:0.21px;">Initial Gross Margin</div>
<div class="t b" style="left:2079.0px;top:517px;font-size:21px;color:#fff;transform:scaleX(1.062);transform-origin:0 0;">44%</div>
<div class="t" style="left:2059.0px;top:563px;font-size:18.5px;color:#3a3a3a;transform:scaleX(1.080);transform-origin:0 0;letter-spacing:0.16px;">Current Gross Margin</div>
<div class="t b" style="left:2079.0px;top:597px;font-size:21px;color:#fff;transform:scaleX(1.051);transform-origin:0 0;">50%</div>
<div class="t b" style="left:484.4px;top:714px;font-size:22.2px;color:#2b2b2b;transform:scaleX(1.080);transform-origin:0 0;letter-spacing:0.45px;">Business Intelligence</div>
<div class="t b" style="left:1881.8px;top:716px;font-size:22.2px;color:#2b2b2b;transform:scaleX(1.080);transform-origin:0 0;letter-spacing:0.43px;">Action Board</div>
<div class="t" style="left:2212.5px;top:717px;font-size:20px;color:#9b9b9b;transform:scaleX(1.020);transform-origin:0 0;">Search</div>
<div class="t b" style="left:1931.9px;top:798px;font-size:18.3px;color:#2b2b2b;transform:scaleX(1.080);transform-origin:0 0;letter-spacing:0.61px;">Elena Vicar</div>
<div class="t b" style="left:1933.0px;top:828px;font-size:15.5px;color:#555;transform:scaleX(1.054);transform-origin:0 0;">1405 Salmo Pkway</div>
<div class="t" style="left:475.8px;top:792px;font-size:15.5px;color:#7a7a7a;transform:scaleX(0.889);transform-origin:0 0;">0</div>
<div class="t" style="left:572.3px;top:792px;font-size:15.5px;color:#7a7a7a;transform:scaleX(0.931);transform-origin:0 0;">250K</div>
<div class="t" style="left:682.2px;top:792px;font-size:15.5px;color:#7a7a7a;transform:scaleX(0.931);transform-origin:0 0;">500K</div>
<div class="t" style="left:792.0px;top:792px;font-size:15.5px;color:#7a7a7a;transform:scaleX(0.931);transform-origin:0 0;">750K</div>
<div class="t" style="left:896.9px;top:792px;font-size:15.5px;color:#7a7a7a;transform:scaleX(1.025);transform-origin:0 0;">1.00M</div>
<div class="t" style="left:1006.7px;top:792px;font-size:15.5px;color:#7a7a7a;transform:scaleX(1.025);transform-origin:0 0;">1.25M</div>
<div class="t" style="left:1116.6px;top:792px;font-size:15.5px;color:#7a7a7a;transform:scaleX(1.025);transform-origin:0 0;">1.50M</div>
<div class="t" style="left:1226.4px;top:792px;font-size:15.5px;color:#7a7a7a;transform:scaleX(1.025);transform-origin:0 0;">1.75M</div>
<div class="t" style="left:1337.3px;top:792px;font-size:15.5px;color:#7a7a7a;">2.00M</div>
<div class="t" style="left:1447.2px;top:792px;font-size:15.5px;color:#7a7a7a;">2.25M</div>
<div class="t" style="left:1557.0px;top:792px;font-size:15.5px;color:#7a7a7a;">2.50M</div>
<div class="t" style="left:1666.8px;top:792px;font-size:15.5px;color:#7a7a7a;">2.75M</div>
<div class="t" style="left:1776.7px;top:792px;font-size:15.5px;color:#7a7a7a;">3.00M</div>
</body></html>
